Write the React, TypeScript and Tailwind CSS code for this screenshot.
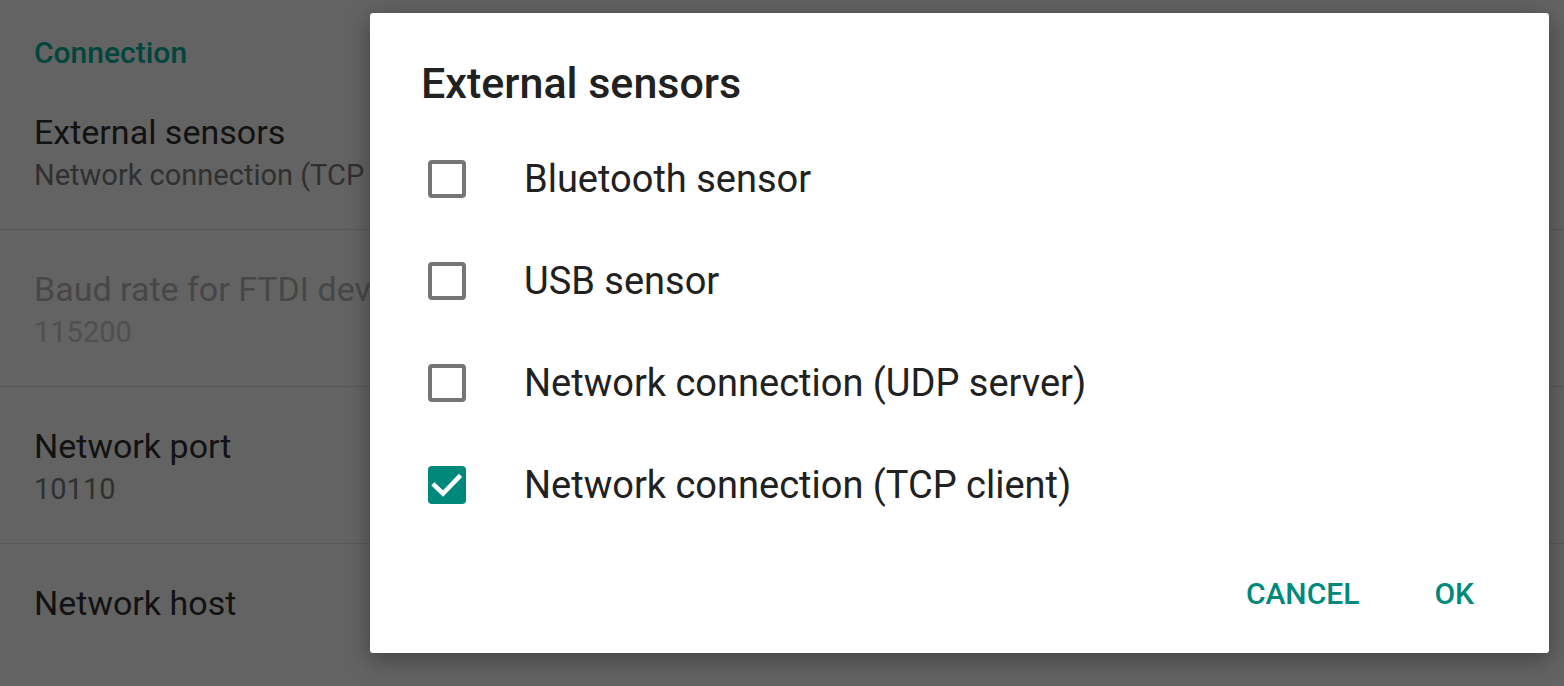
import React from 'react';

const font = { fontFamily: 'Roboto, "Noto Sans", sans-serif' };

interface PrefRowProps {
    title: string;
    summary?: string;
    disabled?: boolean;
    last?: boolean;
}

function PrefRow({ title, summary, disabled, last }: PrefRowProps) {
    return (
        <div className={`pl-[34px] pt-[42px] pb-[39px] ${last ? '' : 'border-b border-[#585858]'}`}>
            <div
                className={`text-[34px] leading-[35px] whitespace-nowrap ${disabled ? 'text-[#474747]' : 'text-[#121212]'}`}
            >
                {title}
            </div>
            {summary && (
                <div
                    className={`mt-[10px] text-[29px] leading-[30px] whitespace-nowrap ${disabled ? 'text-[#4f4f4f]' : 'text-[#303030]'}`}
                >
                    {summary}
                </div>
            )}
        </div>
    );
}

function CheckBox({ checked }: { checked: boolean }) {
    if (checked) {
        return (
            <div className="w-[38px] h-[38px] rounded-[4px] bg-[#00897b] flex items-center justify-center">
                <svg width="38" height="38" viewBox="0 0 38 38" fill="none">
                    <path
                        d="M6.5 19.5 L15 27.5 L31 11"
                        stroke="white"
                        strokeWidth="4.5"
                        strokeLinecap="square"
                    />
                </svg>
            </div>
        );
    }
    return <div className="w-[38px] h-[38px] rounded-[4px] border-[4px] border-[#757575] bg-white" />;
}

const options = [
    { label: 'Bluetooth sensor', checked: false },
    { label: 'USB sensor', checked: false },
    { label: 'Network connection (UDP server)', checked: false },
    { label: 'Network connection (TCP client)', checked: true },
];

export default function App() {
    return (
        <div className="relative w-[1564px] h-[686px] overflow-hidden bg-[#636363]" style={font}>
            {/* settings screen behind the dialog */}
            <div className="flex flex-col">
                <div className="h-[73px] pl-[34px] pt-[38px]">
                    <div className="text-[30px] leading-[30px] font-medium text-[#00463c]">Connection</div>
                </div>
                <PrefRow title="External sensors" summary="Network connection (TCP client)" />
                <PrefRow title="Baud rate for FTDI devices" summary="115200" disabled />
                <PrefRow title="Network port" summary="10110" />
                <PrefRow title="Network host" last />
            </div>

            {/* dialog */}
            <div className="absolute inset-0 pl-[370px] pt-[13px]">
                <div className="w-[1179px] h-[640px] bg-white rounded-[3px] shadow-[0_6px_24px_rgba(0,0,0,0.35)] flex flex-col">
                    <div className="pl-[51px] pt-[48px] text-[43px] leading-[44px] font-medium text-[#212121]">
                        External sensors
                    </div>
                    <div className="mt-[23px] flex flex-col">
                        {options.map((opt) => (
                            <div key={opt.label} className="h-[102px] flex items-center pl-[58px]">
                                <CheckBox checked={opt.checked} />
                                <span className="ml-[58px] text-[38px] leading-[39px] text-[#212121] whitespace-nowrap">
                                    {opt.label}
                                </span>
                            </div>
                        ))}
                    </div>
                    <div className="mt-auto mb-[29px] h-[60px] flex items-center justify-end pr-[75px] gap-[75px]">
                        <span className="text-[30px] leading-[30px] font-medium text-[#00897b]">CANCEL</span>
                        <span className="text-[30px] leading-[30px] font-medium text-[#00897b]">OK</span>
                    </div>
                </div>
            </div>
        </div>
    );
}
